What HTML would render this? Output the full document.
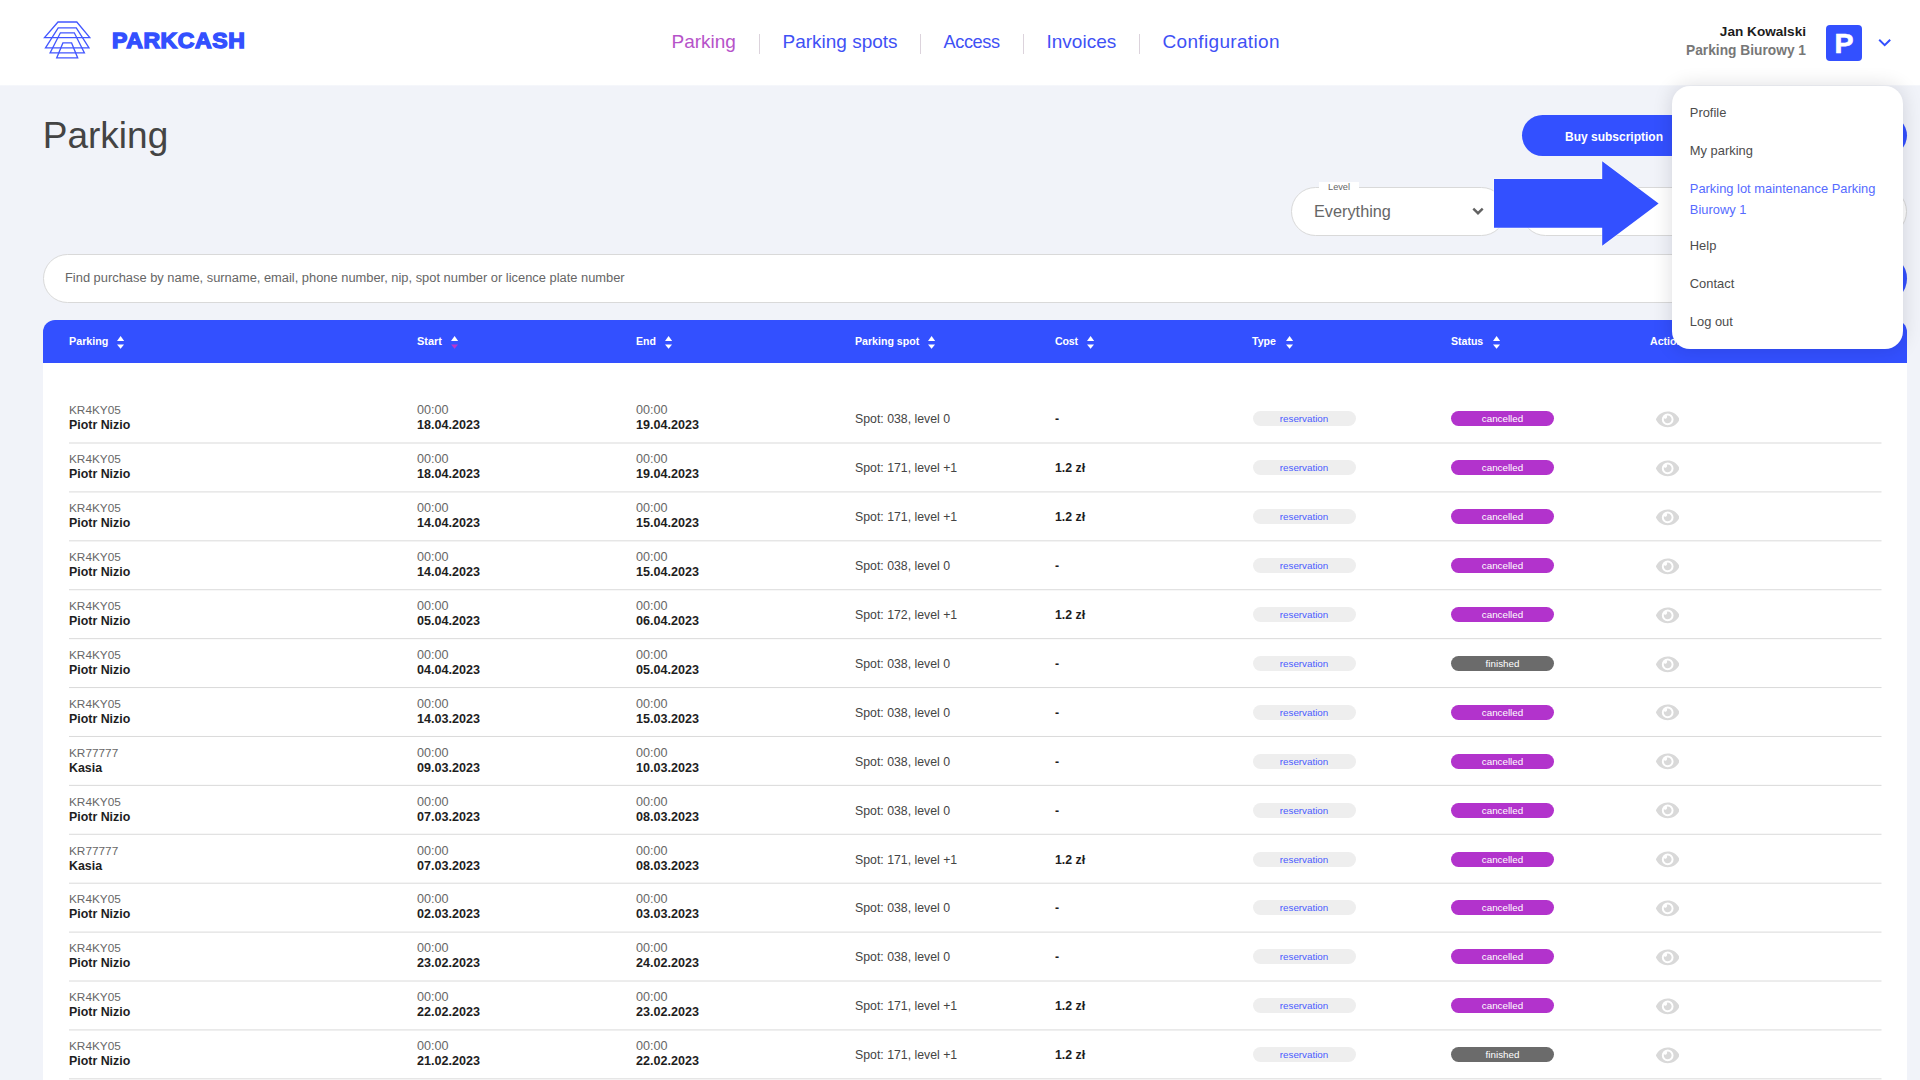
<!DOCTYPE html>
<html lang="en">
<head>
<meta charset="utf-8">
<title>ParkCash - Parking</title>
<style>
*{box-sizing:border-box;margin:0;padding:0}
html,body{width:1920px;height:1080px;overflow:hidden}
body{background:#f1f3f9;font-family:"Liberation Sans",sans-serif;color:#222;position:relative}
.abs{position:absolute;white-space:nowrap}
/* header */
#hdr{position:absolute;left:0;top:0;width:1920px;height:86px;background:linear-gradient(#fff 85px,rgba(255,255,255,.3) 85px)}
#brand{left:111.9px;top:26.5px;font-size:21.2px;line-height:28px;font-weight:700;color:#3350ff;-webkit-text-stroke:1.4px #3350ff;letter-spacing:.55px;transform-origin:0 50%;transform:scaleX(1.085)}
.nav{top:29.8px;font-size:19px;line-height:24px;color:#3f51f5}
.nav.act{color:#b653c9}
.sep{position:absolute;top:34px;width:1px;height:20px;background:#dcd3dc}
#uname{right:114px;top:23.3px;font-size:13.6px;line-height:18px;font-weight:700;color:#1c1c1c}
#upark{right:114px;top:42px;font-size:13.75px;line-height:18px;font-weight:700;color:#777}
#pbox{position:absolute;left:1826px;top:25px;width:36px;height:36px;border-radius:4px;background:#3350ff;color:#fff;font-weight:700;font-size:28.5px;line-height:37px;text-align:center;-webkit-text-stroke:.6px #fff}
/* page */
#title{left:42.8px;top:112.8px;font-size:37px;line-height:46px;color:#444}
.btn{position:absolute;top:115px;height:41px;border-radius:21px;background:#3350ff;color:#fff;font-weight:700;font-size:12px;line-height:44.9px;text-align:center}
.sel{position:absolute;top:187px;height:49px;border-radius:25px;background:#fff;border:1px solid #d9d9d9}
.sel .val{position:absolute;left:22px;top:11.7px;font-size:16.3px;line-height:22px;color:#666}
.sel .lbl{position:absolute;left:27px;top:-6px;width:40px;height:11px;background:#fff;font-size:9.2px;line-height:10px;text-align:center;color:#666}
#search{position:absolute;left:43px;top:254px;width:1864px;height:49px;border-radius:25px;background:#fff;border:1px solid #d9d9d9}
#search span{position:absolute;left:21px;top:15px;font-size:12.88px;line-height:16px;color:#666;white-space:nowrap}
#sbtn{position:absolute;left:1847px;top:254px;width:60px;height:49px;border-radius:25px;background:#3350ff}
/* table */
#tbl{position:absolute;left:43px;top:320px;width:1864px;height:760px;background:#fff;border-radius:12px 12px 0 0}
#thead{position:absolute;left:43px;top:320px;width:1864px;height:43.4px;background:#3350ff;border-radius:12px 12px 0 0}
.th{position:absolute;top:13.4px;font-size:10.6px;line-height:16px;font-weight:700;color:#fff;white-space:nowrap}
.srt{position:absolute;top:2.4px;width:7.2px;height:12.9px;fill:#fff}
.srt .dn{fill:#b636cf}
.row{position:absolute;left:0;width:1920px;height:49px}
.c{position:absolute;top:8.5px;font-size:12.4px;line-height:15px;white-space:nowrap}
.c span,.c b{display:block}
.g{color:#676767;font-size:11.8px}
.c2 .g,.c3 .g{font-size:12.6px}.c2 b,.c3 b{font-size:12.6px}
.c b{color:#1e1e1e}
.c1{left:69px}.c2{left:417px}.c3{left:636px}
.s{position:absolute;top:16.5px;font-size:12.3px;line-height:16px;white-space:nowrap;color:#444}
.s b{color:#1e1e1e}
.c4{left:855px}.c5{left:1055px}
.bd{position:absolute;top:16.6px;height:15px;width:103px;border-radius:8px;font-size:9.8px;line-height:15px;text-align:center;white-space:nowrap}
.res{left:1252.5px;background:#eee;color:#4a5cff}
.can{left:1451px;background:#b233cc;color:#fff}
.fin{left:1451px;background:#6b6b6b;color:#fff}
.eye{position:absolute;left:1655.9px;top:14.2px;width:23.4px;height:20.8px;fill:#d9d9d9}
.ln{position:absolute;left:69px;top:48.4px;width:1812.5px;height:1px;background:#dcdcdc}
/* dropdown */
#dd{position:absolute;left:1672px;top:86.4px;width:231px;height:263px;border-radius:18px;background:#fff;box-shadow:0 0 20px rgba(10,10,30,.14)}
#dd div{position:absolute;left:17.8px;margin-top:.5px;font-size:12.9px;line-height:20px;color:#4c4c4c;white-space:nowrap}
#dd div.hl{color:#566bff}
</style>
</head>
<body>
<div id="hdr">
 <svg class="abs" style="left:40px;top:18px" width="56" height="46" viewBox="40 18 56 46" fill="none" stroke="#4357ff" stroke-width="1.3" stroke-linejoin="miter">
  <path d="M58 22H76.8L89.8 37.7H44.5Z"/>
  <path d="M58.2 27.9H76.3L89 47.8H45.5Z"/>
  <path d="M60.4 32.8H74.3L84.4 52.9H50.1Z"/>
  <path d="M62.9 42.9H71.6L77.7 57.9H56.7Z"/>
 </svg>
 <div id="brand" class="abs">PARKCASH</div>
 <div class="abs nav act" style="left:671.5px">Parking</div>
 <div class="sep" style="left:759px"></div>
 <div class="abs nav" style="left:782.5px">Parking spots</div>
 <div class="sep" style="left:920px"></div>
 <div class="abs nav" style="left:943.5px;font-size:18.2px;letter-spacing:-.42px">Access</div>
 <div class="sep" style="left:1023px"></div>
 <div class="abs nav" style="left:1046.5px">Invoices</div>
 <div class="sep" style="left:1139px"></div>
 <div class="abs nav" style="left:1162.5px;letter-spacing:.33px">Configuration</div>
 <div id="uname" class="abs">Jan Kowalski</div>
 <div id="upark" class="abs">Parking Biurowy 1</div>
 <div id="pbox">P</div>
 <svg class="abs" style="left:1877px;top:37px" width="16" height="12" viewBox="0 0 16 12" fill="none" stroke="#3350ff" stroke-width="2"><path d="M2.2 2.8L7.7 8.2L13.2 2.8"/></svg>
</div>

<div id="title" class="abs">Parking</div>
<div class="btn" style="left:1522px;width:184px">Buy subscription</div>
<div class="btn" style="left:1723px;width:184px"></div>

<div class="sel" style="left:1291px;width:215px"><div class="lbl">Level</div><div class="val">Everything</div>
 <svg class="abs" style="left:177.5px;top:17.5px" width="16" height="12" viewBox="0 0 16 12" fill="none" stroke="#626262" stroke-width="2.4"><path d="M3.3 2.6L8 7.2L12.7 2.6"/></svg>
</div>
<div class="sel" style="left:1521px;width:386px"></div>

<div id="search"><span>Find purchase by name, surname, email, phone number, nip, spot number or licence plate number</span></div>
<div id="sbtn"></div>

<div id="tbl"></div>
<div id="thead">
 <div class="th" style="left:26px;font-size:10.75px">Parking<svg class="srt" style="left:47.8px" viewBox="0 0 7.2 12.9"><path d="M0 5L3.6 0L7.2 5Z"/><path d="M0 8.4H7.2L3.6 12.8Z"/></svg></div>
 <div class="th" style="left:374px;font-size:10.95px">Start<svg class="srt" style="left:34.1px" viewBox="0 0 7.2 12.9"><path d="M0 5L3.6 0L7.2 5Z"/><path class="dn" d="M0 8.4H7.2L3.6 12.8Z"/></svg></div>
 <div class="th" style="left:593px;font-size:10.5px">End<svg class="srt" style="left:29.1px" viewBox="0 0 7.2 12.9"><path d="M0 5L3.6 0L7.2 5Z"/><path d="M0 8.4H7.2L3.6 12.8Z"/></svg></div>
 <div class="th" style="left:812px;font-size:10.6px">Parking spot<svg class="srt" style="left:72.8px" viewBox="0 0 7.2 12.9"><path d="M0 5L3.6 0L7.2 5Z"/><path d="M0 8.4H7.2L3.6 12.8Z"/></svg></div>
 <div class="th" style="left:1012px;letter-spacing:-.15px">Cost<svg class="srt" style="left:31.5px" viewBox="0 0 7.2 12.9"><path d="M0 5L3.6 0L7.2 5Z"/><path d="M0 8.4H7.2L3.6 12.8Z"/></svg></div>
 <div class="th" style="left:1209px;font-size:10.6px">Type<svg class="srt" style="left:34.1px" viewBox="0 0 7.2 12.9"><path d="M0 5L3.6 0L7.2 5Z"/><path d="M0 8.4H7.2L3.6 12.8Z"/></svg></div>
 <div class="th" style="left:1408px;font-size:10.55px">Status<svg class="srt" style="left:41.8px" viewBox="0 0 7.2 12.9"><path d="M0 5L3.6 0L7.2 5Z"/><path d="M0 8.4H7.2L3.6 12.8Z"/></svg></div>
 <div class="th" style="left:1607px">Actions</div>
</div>
<div class="row" style="top:394.8px">
<div class="c c1"><span class="g">KR4KY05</span><b>Piotr Nizio</b></div>
<div class="c c2"><span class="g">00:00</span><b>18.04.2023</b></div>
<div class="c c3"><span class="g">00:00</span><b>19.04.2023</b></div>
<div class="s c4">Spot: 038, level 0</div>
<div class="s c5"><b>-</b></div>
<div class="bd res">reservation</div>
<div class="bd can">cancelled</div>
<svg class="eye" viewBox="0 0 576 512"><path d="M572.52 241.4C518.29 135.59 410.93 64 288 64S57.68 135.64 3.48 241.41a32.35 32.35 0 0 0 0 29.19C57.71 376.41 165.07 448 288 448s230.32-71.64 284.52-177.41a32.35 32.35 0 0 0 0-29.19zM288 400a144 144 0 1 1 144-144 143.93 143.93 0 0 1-144 144zm0-240a95.31 95.31 0 0 0-25.31 3.79 47.85 47.85 0 0 1-66.9 66.9A95.78 95.78 0 1 0 288 160z"/></svg>
</div>
<div class="row" style="top:443.7px">
<div class="c c1"><span class="g">KR4KY05</span><b>Piotr Nizio</b></div>
<div class="c c2"><span class="g">00:00</span><b>18.04.2023</b></div>
<div class="c c3"><span class="g">00:00</span><b>19.04.2023</b></div>
<div class="s c4">Spot: 171, level +1</div>
<div class="s c5"><b>1.2 zł</b></div>
<div class="bd res">reservation</div>
<div class="bd can">cancelled</div>
<svg class="eye" viewBox="0 0 576 512"><path d="M572.52 241.4C518.29 135.59 410.93 64 288 64S57.68 135.64 3.48 241.41a32.35 32.35 0 0 0 0 29.19C57.71 376.41 165.07 448 288 448s230.32-71.64 284.52-177.41a32.35 32.35 0 0 0 0-29.19zM288 400a144 144 0 1 1 144-144 143.93 143.93 0 0 1-144 144zm0-240a95.31 95.31 0 0 0-25.31 3.79 47.85 47.85 0 0 1-66.9 66.9A95.78 95.78 0 1 0 288 160z"/></svg>
</div>
<div class="row" style="top:492.6px">
<div class="c c1"><span class="g">KR4KY05</span><b>Piotr Nizio</b></div>
<div class="c c2"><span class="g">00:00</span><b>14.04.2023</b></div>
<div class="c c3"><span class="g">00:00</span><b>15.04.2023</b></div>
<div class="s c4">Spot: 171, level +1</div>
<div class="s c5"><b>1.2 zł</b></div>
<div class="bd res">reservation</div>
<div class="bd can">cancelled</div>
<svg class="eye" viewBox="0 0 576 512"><path d="M572.52 241.4C518.29 135.59 410.93 64 288 64S57.68 135.64 3.48 241.41a32.35 32.35 0 0 0 0 29.19C57.71 376.41 165.07 448 288 448s230.32-71.64 284.52-177.41a32.35 32.35 0 0 0 0-29.19zM288 400a144 144 0 1 1 144-144 143.93 143.93 0 0 1-144 144zm0-240a95.31 95.31 0 0 0-25.31 3.79 47.85 47.85 0 0 1-66.9 66.9A95.78 95.78 0 1 0 288 160z"/></svg>
</div>
<div class="row" style="top:541.5px">
<div class="c c1"><span class="g">KR4KY05</span><b>Piotr Nizio</b></div>
<div class="c c2"><span class="g">00:00</span><b>14.04.2023</b></div>
<div class="c c3"><span class="g">00:00</span><b>15.04.2023</b></div>
<div class="s c4">Spot: 038, level 0</div>
<div class="s c5"><b>-</b></div>
<div class="bd res">reservation</div>
<div class="bd can">cancelled</div>
<svg class="eye" viewBox="0 0 576 512"><path d="M572.52 241.4C518.29 135.59 410.93 64 288 64S57.68 135.64 3.48 241.41a32.35 32.35 0 0 0 0 29.19C57.71 376.41 165.07 448 288 448s230.32-71.64 284.52-177.41a32.35 32.35 0 0 0 0-29.19zM288 400a144 144 0 1 1 144-144 143.93 143.93 0 0 1-144 144zm0-240a95.31 95.31 0 0 0-25.31 3.79 47.85 47.85 0 0 1-66.9 66.9A95.78 95.78 0 1 0 288 160z"/></svg>
</div>
<div class="row" style="top:590.4px">
<div class="c c1"><span class="g">KR4KY05</span><b>Piotr Nizio</b></div>
<div class="c c2"><span class="g">00:00</span><b>05.04.2023</b></div>
<div class="c c3"><span class="g">00:00</span><b>06.04.2023</b></div>
<div class="s c4">Spot: 172, level +1</div>
<div class="s c5"><b>1.2 zł</b></div>
<div class="bd res">reservation</div>
<div class="bd can">cancelled</div>
<svg class="eye" viewBox="0 0 576 512"><path d="M572.52 241.4C518.29 135.59 410.93 64 288 64S57.68 135.64 3.48 241.41a32.35 32.35 0 0 0 0 29.19C57.71 376.41 165.07 448 288 448s230.32-71.64 284.52-177.41a32.35 32.35 0 0 0 0-29.19zM288 400a144 144 0 1 1 144-144 143.93 143.93 0 0 1-144 144zm0-240a95.31 95.31 0 0 0-25.31 3.79 47.85 47.85 0 0 1-66.9 66.9A95.78 95.78 0 1 0 288 160z"/></svg>
</div>
<div class="row" style="top:639.4px">
<div class="c c1"><span class="g">KR4KY05</span><b>Piotr Nizio</b></div>
<div class="c c2"><span class="g">00:00</span><b>04.04.2023</b></div>
<div class="c c3"><span class="g">00:00</span><b>05.04.2023</b></div>
<div class="s c4">Spot: 038, level 0</div>
<div class="s c5"><b>-</b></div>
<div class="bd res">reservation</div>
<div class="bd fin">finished</div>
<svg class="eye" viewBox="0 0 576 512"><path d="M572.52 241.4C518.29 135.59 410.93 64 288 64S57.68 135.64 3.48 241.41a32.35 32.35 0 0 0 0 29.19C57.71 376.41 165.07 448 288 448s230.32-71.64 284.52-177.41a32.35 32.35 0 0 0 0-29.19zM288 400a144 144 0 1 1 144-144 143.93 143.93 0 0 1-144 144zm0-240a95.31 95.31 0 0 0-25.31 3.79 47.85 47.85 0 0 1-66.9 66.9A95.78 95.78 0 1 0 288 160z"/></svg>
</div>
<div class="row" style="top:688.3px">
<div class="c c1"><span class="g">KR4KY05</span><b>Piotr Nizio</b></div>
<div class="c c2"><span class="g">00:00</span><b>14.03.2023</b></div>
<div class="c c3"><span class="g">00:00</span><b>15.03.2023</b></div>
<div class="s c4">Spot: 038, level 0</div>
<div class="s c5"><b>-</b></div>
<div class="bd res">reservation</div>
<div class="bd can">cancelled</div>
<svg class="eye" viewBox="0 0 576 512"><path d="M572.52 241.4C518.29 135.59 410.93 64 288 64S57.68 135.64 3.48 241.41a32.35 32.35 0 0 0 0 29.19C57.71 376.41 165.07 448 288 448s230.32-71.64 284.52-177.41a32.35 32.35 0 0 0 0-29.19zM288 400a144 144 0 1 1 144-144 143.93 143.93 0 0 1-144 144zm0-240a95.31 95.31 0 0 0-25.31 3.79 47.85 47.85 0 0 1-66.9 66.9A95.78 95.78 0 1 0 288 160z"/></svg>
</div>
<div class="row" style="top:737.2px">
<div class="c c1"><span class="g">KR77777</span><b>Kasia</b></div>
<div class="c c2"><span class="g">00:00</span><b>09.03.2023</b></div>
<div class="c c3"><span class="g">00:00</span><b>10.03.2023</b></div>
<div class="s c4">Spot: 038, level 0</div>
<div class="s c5"><b>-</b></div>
<div class="bd res">reservation</div>
<div class="bd can">cancelled</div>
<svg class="eye" viewBox="0 0 576 512"><path d="M572.52 241.4C518.29 135.59 410.93 64 288 64S57.68 135.64 3.48 241.41a32.35 32.35 0 0 0 0 29.19C57.71 376.41 165.07 448 288 448s230.32-71.64 284.52-177.41a32.35 32.35 0 0 0 0-29.19zM288 400a144 144 0 1 1 144-144 143.93 143.93 0 0 1-144 144zm0-240a95.31 95.31 0 0 0-25.31 3.79 47.85 47.85 0 0 1-66.9 66.9A95.78 95.78 0 1 0 288 160z"/></svg>
</div>
<div class="row" style="top:786.1px">
<div class="c c1"><span class="g">KR4KY05</span><b>Piotr Nizio</b></div>
<div class="c c2"><span class="g">00:00</span><b>07.03.2023</b></div>
<div class="c c3"><span class="g">00:00</span><b>08.03.2023</b></div>
<div class="s c4">Spot: 038, level 0</div>
<div class="s c5"><b>-</b></div>
<div class="bd res">reservation</div>
<div class="bd can">cancelled</div>
<svg class="eye" viewBox="0 0 576 512"><path d="M572.52 241.4C518.29 135.59 410.93 64 288 64S57.68 135.64 3.48 241.41a32.35 32.35 0 0 0 0 29.19C57.71 376.41 165.07 448 288 448s230.32-71.64 284.52-177.41a32.35 32.35 0 0 0 0-29.19zM288 400a144 144 0 1 1 144-144 143.93 143.93 0 0 1-144 144zm0-240a95.31 95.31 0 0 0-25.31 3.79 47.85 47.85 0 0 1-66.9 66.9A95.78 95.78 0 1 0 288 160z"/></svg>
</div>
<div class="row" style="top:835.0px">
<div class="c c1"><span class="g">KR77777</span><b>Kasia</b></div>
<div class="c c2"><span class="g">00:00</span><b>07.03.2023</b></div>
<div class="c c3"><span class="g">00:00</span><b>08.03.2023</b></div>
<div class="s c4">Spot: 171, level +1</div>
<div class="s c5"><b>1.2 zł</b></div>
<div class="bd res">reservation</div>
<div class="bd can">cancelled</div>
<svg class="eye" viewBox="0 0 576 512"><path d="M572.52 241.4C518.29 135.59 410.93 64 288 64S57.68 135.64 3.48 241.41a32.35 32.35 0 0 0 0 29.19C57.71 376.41 165.07 448 288 448s230.32-71.64 284.52-177.41a32.35 32.35 0 0 0 0-29.19zM288 400a144 144 0 1 1 144-144 143.93 143.93 0 0 1-144 144zm0-240a95.31 95.31 0 0 0-25.31 3.79 47.85 47.85 0 0 1-66.9 66.9A95.78 95.78 0 1 0 288 160z"/></svg>
</div>
<div class="row" style="top:883.9px">
<div class="c c1"><span class="g">KR4KY05</span><b>Piotr Nizio</b></div>
<div class="c c2"><span class="g">00:00</span><b>02.03.2023</b></div>
<div class="c c3"><span class="g">00:00</span><b>03.03.2023</b></div>
<div class="s c4">Spot: 038, level 0</div>
<div class="s c5"><b>-</b></div>
<div class="bd res">reservation</div>
<div class="bd can">cancelled</div>
<svg class="eye" viewBox="0 0 576 512"><path d="M572.52 241.4C518.29 135.59 410.93 64 288 64S57.68 135.64 3.48 241.41a32.35 32.35 0 0 0 0 29.19C57.71 376.41 165.07 448 288 448s230.32-71.64 284.52-177.41a32.35 32.35 0 0 0 0-29.19zM288 400a144 144 0 1 1 144-144 143.93 143.93 0 0 1-144 144zm0-240a95.31 95.31 0 0 0-25.31 3.79 47.85 47.85 0 0 1-66.9 66.9A95.78 95.78 0 1 0 288 160z"/></svg>
</div>
<div class="row" style="top:932.8px">
<div class="c c1"><span class="g">KR4KY05</span><b>Piotr Nizio</b></div>
<div class="c c2"><span class="g">00:00</span><b>23.02.2023</b></div>
<div class="c c3"><span class="g">00:00</span><b>24.02.2023</b></div>
<div class="s c4">Spot: 038, level 0</div>
<div class="s c5"><b>-</b></div>
<div class="bd res">reservation</div>
<div class="bd can">cancelled</div>
<svg class="eye" viewBox="0 0 576 512"><path d="M572.52 241.4C518.29 135.59 410.93 64 288 64S57.68 135.64 3.48 241.41a32.35 32.35 0 0 0 0 29.19C57.71 376.41 165.07 448 288 448s230.32-71.64 284.52-177.41a32.35 32.35 0 0 0 0-29.19zM288 400a144 144 0 1 1 144-144 143.93 143.93 0 0 1-144 144zm0-240a95.31 95.31 0 0 0-25.31 3.79 47.85 47.85 0 0 1-66.9 66.9A95.78 95.78 0 1 0 288 160z"/></svg>
</div>
<div class="row" style="top:981.7px">
<div class="c c1"><span class="g">KR4KY05</span><b>Piotr Nizio</b></div>
<div class="c c2"><span class="g">00:00</span><b>22.02.2023</b></div>
<div class="c c3"><span class="g">00:00</span><b>23.02.2023</b></div>
<div class="s c4">Spot: 171, level +1</div>
<div class="s c5"><b>1.2 zł</b></div>
<div class="bd res">reservation</div>
<div class="bd can">cancelled</div>
<svg class="eye" viewBox="0 0 576 512"><path d="M572.52 241.4C518.29 135.59 410.93 64 288 64S57.68 135.64 3.48 241.41a32.35 32.35 0 0 0 0 29.19C57.71 376.41 165.07 448 288 448s230.32-71.64 284.52-177.41a32.35 32.35 0 0 0 0-29.19zM288 400a144 144 0 1 1 144-144 143.93 143.93 0 0 1-144 144zm0-240a95.31 95.31 0 0 0-25.31 3.79 47.85 47.85 0 0 1-66.9 66.9A95.78 95.78 0 1 0 288 160z"/></svg>
</div>
<div class="row" style="top:1030.6px">
<div class="c c1"><span class="g">KR4KY05</span><b>Piotr Nizio</b></div>
<div class="c c2"><span class="g">00:00</span><b>21.02.2023</b></div>
<div class="c c3"><span class="g">00:00</span><b>22.02.2023</b></div>
<div class="s c4">Spot: 171, level +1</div>
<div class="s c5"><b>1.2 zł</b></div>
<div class="bd res">reservation</div>
<div class="bd fin">finished</div>
<svg class="eye" viewBox="0 0 576 512"><path d="M572.52 241.4C518.29 135.59 410.93 64 288 64S57.68 135.64 3.48 241.41a32.35 32.35 0 0 0 0 29.19C57.71 376.41 165.07 448 288 448s230.32-71.64 284.52-177.41a32.35 32.35 0 0 0 0-29.19zM288 400a144 144 0 1 1 144-144 143.93 143.93 0 0 1-144 144zm0-240a95.31 95.31 0 0 0-25.31 3.79 47.85 47.85 0 0 1-66.9 66.9A95.78 95.78 0 1 0 288 160z"/></svg>
</div>
<svg class="abs" style="left:0;top:0" width="1920" height="1080" fill="#dadada"><rect x="69" y="442.50" width="1812.5" height="1"/><rect x="69" y="491.41" width="1812.5" height="1"/><rect x="69" y="540.32" width="1812.5" height="1"/><rect x="69" y="589.23" width="1812.5" height="1"/><rect x="69" y="638.14" width="1812.5" height="1"/><rect x="69" y="687.05" width="1812.5" height="1"/><rect x="69" y="735.96" width="1812.5" height="1"/><rect x="69" y="784.87" width="1812.5" height="1"/><rect x="69" y="833.78" width="1812.5" height="1"/><rect x="69" y="882.69" width="1812.5" height="1"/><rect x="69" y="931.60" width="1812.5" height="1"/><rect x="69" y="980.51" width="1812.5" height="1"/><rect x="69" y="1029.42" width="1812.5" height="1"/><rect x="69" y="1078.33" width="1812.5" height="1"/></svg>

<svg class="abs" style="left:1490px;top:158px" width="172" height="92" viewBox="1490 158 172 92"><path d="M1494 179H1602.2V161.2L1658.6 203.4L1602.2 245.7V227.8H1494Z" fill="#3350ff" stroke="#fff" stroke-opacity=".7" stroke-width="1.2" paint-order="stroke"/></svg>

<div id="dd">
 <div style="top:16px">Profile</div>
 <div style="top:54px">My parking</div>
 <div class="hl" style="top:92px">Parking lot maintenance Parking</div>
 <div class="hl" style="top:113px">Biurowy 1</div>
 <div style="top:149.4px">Help</div>
 <div style="top:187.4px">Contact</div>
 <div style="top:225.4px">Log out</div>
</div>
</body>
</html>
